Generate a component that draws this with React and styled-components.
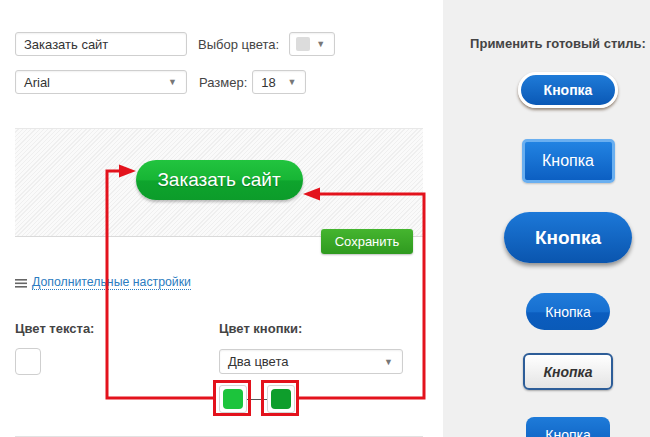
import React from "react";
import styled, { createGlobalStyle, css } from "styled-components";

const GlobalStyle = createGlobalStyle`
  html, body {
    margin: 0;
    padding: 0;
    background: #fff;
  }
  body {
    font-family: "Liberation Sans", Arial, sans-serif;
    color: #333;
  }
`;

const Page = styled.div`
  position: relative;
  width: 650px;
  height: 437px;
  overflow: hidden;
  display: flex;
`;

const Left = styled.div`
  width: 408px;
  padding: 32px 0 0 15px;
  flex-shrink: 0;
  display: flex;
  flex-direction: column;
`;

const Row = styled.div`
  display: flex;
  align-items: center;
  height: 24px;
  margin-top: ${(p) => p.$mt || 0}px;
`;

const Field = styled.div`
  box-sizing: border-box;
  width: ${(p) => p.$w}px;
  height: 24px;
  border: 1px solid #cfcfcf;
  border-radius: 3px;
  background: #fff;
  box-shadow: inset 0 1px 2px rgba(0, 0, 0, 0.06);
  display: flex;
  align-items: center;
  justify-content: space-between;
  padding: 0 9px 0 ${(p) => p.$pl || 8}px;
  font-size: 13px;
  color: #333;
`;

const Arrow = styled.span`
  font-size: 9px;
  color: #777;
`;

const Swatch = styled.span`
  width: 14px;
  height: 14px;
  border-radius: 2px;
  background: #dcdcdc;
`;

const Label = styled.span`
  font-size: 13px;
  color: #444;
  margin: 0 ${(p) => p.$mr || 10}px 0 ${(p) => p.$ml || 11}px;
`;

const Preview = styled.div`
  margin-top: 34px;
  height: 105px;
  border-top: 1px solid #e8e8e8;
  border-bottom: 1px solid #dadada;
  background: repeating-linear-gradient(
    135deg,
    #fafafa 0px,
    #fafafa 2px,
    #efefef 2px,
    #efefef 3px
  );
  display: flex;
  justify-content: center;
  padding-top: 31px;
  box-sizing: content-box;
`;

const OrderButton = styled.div`
  width: 167px;
  height: 40px;
  border-radius: 20px;
  background: linear-gradient(#22c43f 0%, #17b535 50%, #0ea42d 52%, #0c9c2a 100%);
  box-shadow: 0 2px 3px rgba(0, 0, 0, 0.25);
  color: #fff;
  font-size: 19px;
  text-shadow: 0 1px 1px rgba(0, 0, 0, 0.25);
  display: flex;
  align-items: center;
  justify-content: center;
`;

const SaveRow = styled.div`
  display: flex;
  justify-content: flex-end;
  margin: -8px 10px 0 0;
`;

const SaveButton = styled.div`
  width: 92px;
  height: 25px;
  border-radius: 3px;
  background: linear-gradient(#45b52f, #2f9a1f);
  box-shadow: 0 1px 2px rgba(0, 0, 0, 0.25);
  color: #fff;
  font-size: 13px;
  display: flex;
  align-items: center;
  justify-content: center;
`;

const MoreLink = styled.div`
  margin-top: 21px;
  display: flex;
  align-items: center;
  gap: 5px;
  font-size: 12.3px;
  height: 16px;
`;

const LinkText = styled.span`
  color: #2b7cc0;
  border-bottom: 1px dotted #2b7cc0;
  line-height: 14px;
`;

const ColorGrid = styled.div`
  margin-top: 31px;
  display: grid;
  grid-template-columns: 204px 184px;
`;

const Column = styled.div`
  display: flex;
  flex-direction: column;
`;

const Heading = styled.div`
  font-size: 13px;
  font-weight: bold;
  color: #444;
  height: 16px;
  line-height: 16px;
`;

const WhiteBox = styled.div`
  margin-top: 11px;
  width: 26px;
  height: 27px;
  box-sizing: border-box;
  border: 1px solid #cfcfcf;
  border-radius: 4px;
  background: #fff;
`;

const SelectWide = styled(Field)`
  margin-top: 12px;
  width: 184px;
  height: 25px;
`;

const SwatchRow = styled.div`
  margin-top: 11px;
  display: flex;
  align-items: center;
`;

const ColorChip = styled.div`
  width: 28px;
  height: 28px;
  box-sizing: border-box;
  border: 1px solid #d6d6d6;
  border-radius: 3px;
  background: #fff;
  display: flex;
  align-items: center;
  justify-content: center;

  &::after {
    content: "";
    width: 20px;
    height: 20px;
    border-radius: 4px;
    background: ${(p) => p.$color};
  }
`;

const Dash = styled.span`
  width: 20px;
  height: 1px;
  background: #555;
`;

const BottomRule = styled.div`
  margin-top: 23px;
  height: 1px;
  background: #e2e2e2;
`;

const Right = styled.div`
  margin-left: 20px;
  width: 250px;
  flex-shrink: 0;
  background: #f0f0f0;
  display: flex;
  flex-direction: column;
  align-items: center;
  padding-top: 36px;
`;

const PanelTitle = styled.div`
  font-size: 13px;
  font-weight: bold;
  color: #444;
  line-height: 16px;
  margin-right: 20px;
`;

const variants = {
  one: css`
    margin-top: 20px;
    width: 100px;
    height: 36px;
    border-radius: 18px;
    border: 3px solid #fff;
    background: linear-gradient(#1f7bd8, #0a58b5);
    box-shadow: 0 2px 3px rgba(60, 30, 0, 0.5);
    font-weight: bold;
    font-size: 14px;
  `,
  two: css`
    margin-top: 31px;
    width: 93px;
    height: 44px;
    border-radius: 5px;
    border: 3px solid #6aaff0;
    background: linear-gradient(#2283e2, #0c5fc2);
    box-shadow: 0 1px 2px rgba(0, 0, 0, 0.2);
    font-size: 16px;
  `,
  three: css`
    margin-top: 29px;
    width: 128px;
    height: 51px;
    border-radius: 26px;
    background: linear-gradient(#1c78d8, #0a55ae);
    box-shadow: 0 3px 4px rgba(0, 0, 0, 0.4);
    font-weight: bold;
    font-size: 19px;
  `,
  four: css`
    margin-top: 30px;
    width: 84px;
    height: 37px;
    border-radius: 19px;
    background: linear-gradient(#207cda 0%, #176fd0 52%, #0b5dbf 53%, #0a5ab8 100%);
    font-size: 14px;
  `,
  five: css`
    margin-top: 23px;
    width: 90px;
    height: 37px;
    border-radius: 6px;
    border: 2px solid #2d5d98;
    background: linear-gradient(#ffffff, #e4e4e4);
    box-shadow: 0 1px 2px rgba(0, 0, 0, 0.3);
    color: #333;
    font-weight: bold;
    font-style: italic;
    font-size: 14px;
  `,
  six: css`
    margin-top: 27px;
    width: 84px;
    height: 36px;
    border-radius: 8px;
    background: linear-gradient(#1e7bd9, #0b5cbd);
    font-size: 14px;
  `,
};

const StyleButton = styled.div`
  box-sizing: border-box;
  flex-shrink: 0;
  color: #fff;
  display: flex;
  align-items: center;
  justify-content: center;
  ${(p) => variants[p.$variant]}
`;

const Overlay = styled.svg`
  position: absolute;
  left: 0;
  top: 0;
  pointer-events: none;
`;

const MenuIcon = () => (
  <svg width="12" height="10" viewBox="0 0 12 10">
    <rect x="0" y="1" width="12" height="1.6" fill="#666" />
    <rect x="0" y="4.5" width="12" height="1.6" fill="#666" />
    <rect x="0" y="8" width="12" height="1.6" fill="#666" />
  </svg>
);

const Annotations = () => (
  <Overlay width="650" height="437" viewBox="0 0 650 437">
    <g fill="none" stroke="#e3121c" strokeWidth="3">
      <path d="M213 398 H107 V171 H122" />
      <path d="M299 398 H424 V194 H318" />
      <rect x="214.5" y="381.5" width="35" height="33" />
      <rect x="262.5" y="381.5" width="35" height="33" />
    </g>
    <polygon points="136,171 119,164.5 119,177.5" fill="#e3121c" />
    <polygon points="303,194 320,187.5 320,200.5" fill="#e3121c" />
  </Overlay>
);

const App = () => {
  return (
    <Page>
      <GlobalStyle />
      <Left>
        <Row>
          <Field $w={172}>Заказать сайт</Field>
          <Label>Выбор цвета:</Label>
          <Field $w={46} $pl={6}>
            <Swatch />
            <Arrow>▼</Arrow>
          </Field>
        </Row>
        <Row $mt={14}>
          <Field $w={172}>
            Arial
            <Arrow>▼</Arrow>
          </Field>
          <Label $ml={12} $mr={5}>
            Размер:
          </Label>
          <Field $w={54}>
            18
            <Arrow>▼</Arrow>
          </Field>
        </Row>
        <Preview>
          <OrderButton>Заказать сайт</OrderButton>
        </Preview>
        <SaveRow>
          <SaveButton>Сохранить</SaveButton>
        </SaveRow>
        <MoreLink>
          <MenuIcon />
          <LinkText>Дополнительные настройки</LinkText>
        </MoreLink>
        <ColorGrid>
          <Column>
            <Heading>Цвет текста:</Heading>
            <WhiteBox />
          </Column>
          <Column>
            <Heading>Цвет кнопки:</Heading>
            <SelectWide>
              Два цвета
              <Arrow>▼</Arrow>
            </SelectWide>
            <SwatchRow>
              <ColorChip $color="#1cc43c" />
              <Dash />
              <ColorChip $color="#0e9e2c" />
            </SwatchRow>
          </Column>
        </ColorGrid>
        <BottomRule />
      </Left>
      <Right>
        <PanelTitle>Применить готовый стиль:</PanelTitle>
        <StyleButton $variant="one">Кнопка</StyleButton>
        <StyleButton $variant="two">Кнопка</StyleButton>
        <StyleButton $variant="three">Кнопка</StyleButton>
        <StyleButton $variant="four">Кнопка</StyleButton>
        <StyleButton $variant="five">Кнопка</StyleButton>
        <StyleButton $variant="six">Кнопка</StyleButton>
      </Right>
      <Annotations />
    </Page>
  );
};

export default App;
